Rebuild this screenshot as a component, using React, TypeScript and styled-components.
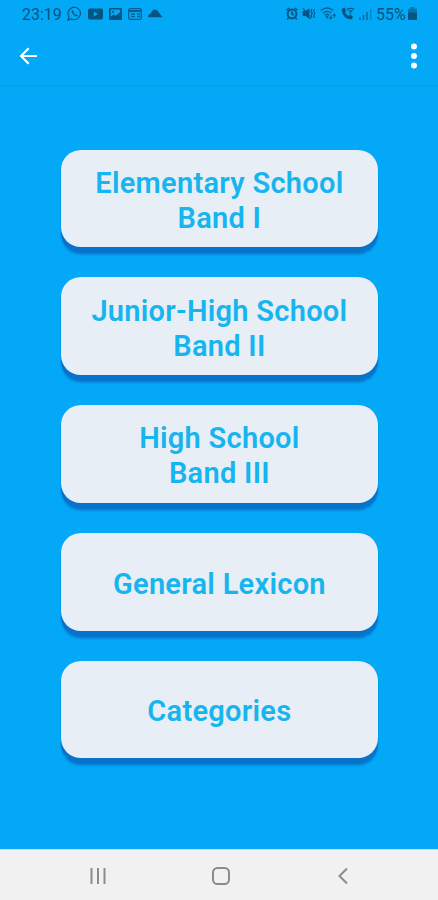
import React from "react";
import styled, { createGlobalStyle } from "styled-components";

const GlobalStyle = createGlobalStyle`
  * { box-sizing: border-box; }
  body { margin: 0; background: #03a9f7; font-family: Roboto, "Noto Sans", sans-serif; }
  svg { display: block; flex: none; }
`;

const Screen = styled.div`
  display: flex;
  flex-direction: column;
  height: 900px;
  background: #03a9f7;
  overflow: hidden;
`;

const StatusBar = styled.div`
  display: flex;
  justify-content: space-between;
  align-items: center;
  height: 27px;
  padding: 0 21px 0 22px;
  color: #075480;
`;

const StatusGroup = styled.div<{ $gap: number }>`
  display: flex;
  align-items: center;
  gap: ${(p) => p.$gap}px;
`;

const StatusText = styled.span<{ $width: number }>`
  width: ${(p) => p.$width}px;
  font-size: 16px;
  line-height: 27px;
  white-space: nowrap;
  padding-top: 1px;
`;

const AppBar = styled.header`
  display: flex;
  justify-content: space-between;
  align-items: center;
  height: 60px;
  padding: 0 19px;
  border-bottom: 2px solid #04a1ee;
`;

const IconButton = styled.button`
  display: flex;
  padding: 0;
  border: 0;
  background: none;
  color: #fff;
`;

const Menu = styled.main`
  flex: 1;
  display: flex;
  flex-direction: column;
  align-items: center;
  gap: 30px;
  padding: 62.8px 0 0 0.8px;
`;

const MenuButton = styled.button`
  display: flex;
  align-items: center;
  justify-content: center;
  flex: none;
  width: 317.6px;
  height: 97.7px;
  padding: 4.4px 0 0;
  border: 0;
  border-radius: 20px;
  background: #e8eef6;
  box-shadow: 0 5.5px 1px #0873cb, 0 7.5px 2px #078add;
  color: #16b5ef;
  font: 600 29px/34.8px Roboto, "Noto Sans", sans-serif;
  letter-spacing: 0.28px;
  white-space: pre-line;
`;

const NavBar = styled.nav`
  display: flex;
  align-items: center;
  justify-content: space-between;
  height: 51px;
  padding: 2px 85px 0 88px;
  background: #f1f1f1;
  border-top: 1px solid #b9e2f5;
  color: #8b8b8b;
`;

const items = [
  "Elementary School\nBand I",
  "Junior-High School\nBand II",
  "High School\nBand III",
  "General Lexicon",
  "Categories",
];

const WhatsAppIcon = () => (
  <svg width="15" height="15" viewBox="0 0 15 15" fill="none" stroke="currentColor">
    <path d="M1 14l1-3.2A6.2 6.2 0 1 1 4.4 13z" strokeWidth="1.2" />
    <path d="M5.2 4.2c-1 1.3.2 3.3 1.6 4.6s3 2 4 .8l-1.6-1.2-1 .7-2-2 .6-1z" fill="currentColor" strokeWidth=".4" />
  </svg>
);

const VideoIcon = () => (
  <svg width="15" height="12" viewBox="0 0 15 12">
    <path fill="currentColor" fillRule="evenodd" d="M2 .5h11q2 0 2 2v7q0 2-2 2H2q-2 0-2-2v-7q0-2 2-2zM5.8 3.6v5L10 6z" />
  </svg>
);

const PictureIcon = () => (
  <svg width="13" height="12" viewBox="0 0 13 12">
    <path fill="currentColor" fillRule="evenodd" d="M1 0h11q1 0 1 1v10q0 1-1 1H1q-1 0-1-1V1q0-1 1-1zm.7 1.6v7.2l2.8-2.6 2 1.5 4.7-3.4V1.6zM3 3h2v1.7H3z" />
  </svg>
);

const NewsIcon = () => (
  <svg width="14" height="12" viewBox="0 0 14 12" fill="none" stroke="currentColor" opacity=".85">
    <rect x=".7" y=".7" width="12.6" height="10.6" rx="1.5" strokeWidth="1.3" />
    <path d="M1 3h12" strokeWidth="2" />
    <path d="M3 6h4M3 8.5h4M9 6h3M9 8.5h3" strokeWidth="1.3" />
  </svg>
);

const CloudIcon = () => (
  <svg width="15" height="9" viewBox="0 0 15 9">
    <path fill="currentColor" d="M0 8.3q.2-3.6 3.2-4Q4.2.6 7 .6q2.6 0 3.8 2.9l3.9 4.8z" />
  </svg>
);

const AlarmIcon = () => (
  <svg width="12" height="13" viewBox="0 0 12 13" fill="none" stroke="currentColor">
    <circle cx="6" cy="7" r="4.4" strokeWidth="2" />
    <path d="M.6 3.2L3.3 1M11.4 3.2L8.7 1M2.5 11l-1.4 1.4M9.5 11l1.4 1.4M6 4.5V7l1.8 1" strokeWidth="1.6" />
  </svg>
);

const MuteIcon = () => (
  <svg width="14" height="13" viewBox="0 0 14 13" fill="none" stroke="currentColor">
    <path d="M1 4.5h2.5L7 2v9L3.5 8.5H1z" fill="currentColor" />
    <path d="M1 1l7.5 11" strokeWidth="1.2" />
    <path d="M10 2l-1 2.2 1.2 2.2L9 8.7l1 2.3M12.6 2l-1 2.2 1.2 2.2-1.2 2.3 1 2.3" strokeWidth="1.1" />
  </svg>
);

const WifiIcon = () => (
  <svg width="17" height="13" viewBox="0 0 17 13" fill="none" stroke="currentColor" opacity=".85">
    <path d="M.8 3.5Q7 -1.5 13.2 3.5M2.8 6Q7 2.7 11.2 6M4.8 8.2Q7 6.3 9.2 8.2" strokeWidth="1.3" />
    <circle cx="7" cy="10" r="1" fill="currentColor" />
    <path d="M10.8 11.8V8.2M9.4 10.4l1.4 1.5 1.4-1.5M14.3 7.2v3.6M12.9 8.6l1.4-1.5 1.4 1.5" strokeWidth="1.1" />
  </svg>
);

const CallIcon = () => (
  <svg width="14" height="13" viewBox="0 0 14 13" fill="none" stroke="currentColor">
    <path d="M1 2.2L3.5 1l1.3 3-1.2 1.2q1 2.4 3.8 4l1.4-1.3 2.8 1.5-1 2.5Q2.2 12.5 1 2.2z" fill="currentColor" strokeWidth=".8" />
    <path d="M5.8 2.5Q9.5.2 13.2 2.5M7.5 4.5q2-1.3 4 0M9.5 5.5v1.7" strokeWidth="1.3" />
  </svg>
);

const SignalIcon = () => (
  <svg width="13" height="12" viewBox="0 0 13 12" stroke="currentColor" strokeWidth="1.5">
    <path d="M1 12V9M4.5 12V7M8 12V4" opacity=".75" />
    <path d="M11.7 12V1" opacity=".4" />
  </svg>
);

const BatteryIcon = () => (
  <svg width="9" height="13" viewBox="0 0 9 13" fill="currentColor">
    <path d="M2.5 0h4v1.8H9V6H0V1.8h2.5z" opacity=".6" />
    <path d="M0 5.5h9V12q0 1-1 1H1q-1 0-1-1z" />
  </svg>
);

export default function App() {
  return (
    <Screen>
      <GlobalStyle />
      <StatusBar>
        <StatusGroup $gap={6}>
          <StatusText $width={39}>23:19</StatusText>
          <WhatsAppIcon />
          <VideoIcon />
          <PictureIcon />
          <NewsIcon />
          <CloudIcon />
        </StatusGroup>
        <StatusGroup $gap={4}>
          <AlarmIcon />
          <MuteIcon />
          <WifiIcon />
          <CallIcon />
          <SignalIcon />
          <StatusText $width={28}>55%</StatusText>
          <BatteryIcon />
        </StatusGroup>
      </StatusBar>
      <AppBar>
        <IconButton aria-label="Back">
          <svg width="19" height="18" viewBox="0 0 19 18" fill="none" stroke="currentColor" strokeWidth="2.1">
            <path d="M18 9H2.5M9.7 1.3L2 9l7.7 7.7" />
          </svg>
        </IconButton>
        <IconButton aria-label="More options">
          <svg width="10" height="28" viewBox="0 0 10 28" fill="currentColor">
            <circle cx="5" cy="4.5" r="3" />
            <circle cx="5" cy="14" r="3" />
            <circle cx="5" cy="23.5" r="3" />
          </svg>
        </IconButton>
      </AppBar>
      <Menu>
        {items.map((label) => (
          <MenuButton key={label}>{label}</MenuButton>
        ))}
      </Menu>
      <NavBar>
        <svg width="20" height="18" viewBox="0 0 20 18" stroke="currentColor" strokeWidth="2">
          <path d="M3.5 1v16M10 1v16M16.5 1v16" />
        </svg>
        <svg width="20" height="20" viewBox="0 0 20 20" fill="none" stroke="currentColor" strokeWidth="2">
          <rect x="2" y="2" width="16" height="16" rx="4.5" />
        </svg>
        <svg width="20" height="18" viewBox="0 0 20 18" fill="none" stroke="currentColor" strokeWidth="2">
          <path d="M14 1.5L6.5 9l7.5 7.5" />
        </svg>
      </NavBar>
    </Screen>
  );
}
